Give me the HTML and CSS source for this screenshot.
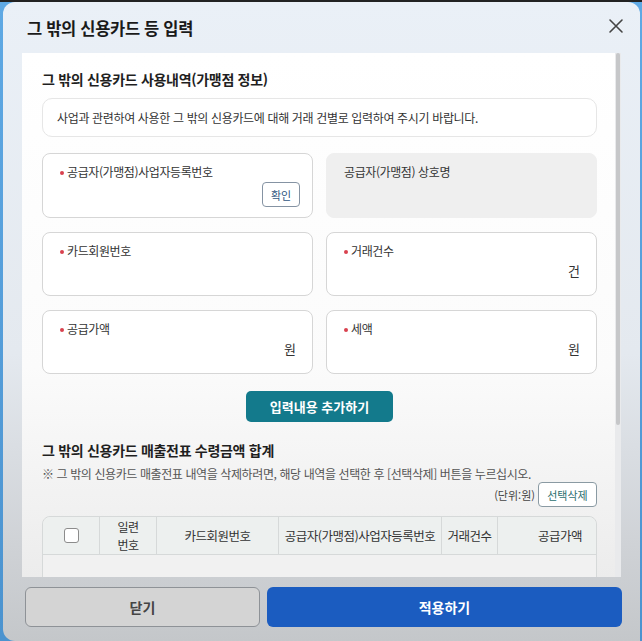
FILE: index.html
```html
<!DOCTYPE html>
<html lang="ko">
<head>
<meta charset="utf-8">
<link rel="stylesheet" href="styles.css">
</head>
<body>
<div class="modal">
  <div class="modal-header">
    <h1 class="modal-title">그 밖의 신용카드 등 입력</h1>
    <svg class="close" width="16" height="16" viewBox="0 0 16 16"><path d="M2 2L14 14M14 2L2 14" stroke="#444" stroke-width="1.6" fill="none" stroke-linecap="round"/></svg>
  </div>
  <div class="modal-body">
    <div class="panel">
      <h2 class="sec-title">그 밖의 신용카드 사용내역(가맹점 정보)</h2>
      <div class="notice">사업과 관련하여 사용한 그 밖의 신용카드에 대해 거래 건별로 입력하여 주시기 바랍니다.</div>
      <div class="fields">
        <div class="field">
          <div class="label req">공급자(가맹점)사업자등록번호</div>
          <button class="btn-check">확인</button>
        </div>
        <div class="field disabled">
          <div class="label">공급자(가맹점) 상호명</div>
        </div>
        <div class="field">
          <div class="label req">카드회원번호</div>
        </div>
        <div class="field">
          <div class="label req">거래건수</div>
          <div class="unit">건</div>
        </div>
        <div class="field">
          <div class="label req">공급가액</div>
          <div class="unit">원</div>
        </div>
        <div class="field">
          <div class="label req">세액</div>
          <div class="unit">원</div>
        </div>
      </div>
      <div class="add-row"><button class="btn-add">입력내용 추가하기</button></div>
      <h2 class="sec-title sec2">그 밖의 신용카드 매출전표 수령금액 합계</h2>
      <p class="note">※ 그 밖의 신용카드 매출전표 내역을 삭제하려면, 해당 내역을 선택한 후 [선택삭제] 버튼을 누르십시오.</p>
      <div class="tools"><span class="unit-note">(단위:원)</span><button class="btn-del">선택삭제</button></div>
      <div class="table">
        <div class="thead">
          <div class="th c1"><span class="chk"></span></div>
          <div class="th c2"><span class="stack"><span>일련</span><span>번호</span></span></div>
          <div class="th c3">카드회원번호</div>
          <div class="th c4">공급자(가맹점)사업자등록번호</div>
          <div class="th c5">거래건수</div>
          <div class="th c6">공급가액</div>
        </div>
        <div class="tbody"></div>
      </div>
    </div>
    <div class="scroll"><div class="thumb"></div></div>
  </div>
  <div class="modal-footer">
    <button class="btn-close">닫기</button>
    <button class="btn-apply">적용하기</button>
  </div>
</div>
</body>
</html>
```
FILE: styles.css
```css
* { box-sizing: border-box; }
html, body { margin: 0; padding: 0; }
body {
  width: 642px;
  height: 641px;
  overflow: hidden;
  background: linear-gradient(180deg, #5fa9e4 0%, #4b93cf 100%);
  border-top: 2px solid #222;
  padding-left: 3px;
  padding-right: 2px;
  font-family: "Noto Sans CJK KR", "Noto Sans", sans-serif;
  color: #222;
}
button { font-family: inherit; cursor: pointer; }
.modal {
  height: 639px;
  border-radius: 12px 12px 0 12px;
  background: linear-gradient(180deg, #eaf0f7 0%, #e4e9ef 55%, #cfd2d6 85%, #c4c7ca 100%);
  display: flex;
  flex-direction: column;
}
.modal-header {
  height: 51px;
  display: flex;
  align-items: center;
  justify-content: space-between;
  padding: 0 16px 0 24px;
}
.modal-title {
  margin: 0;
  font-size: 16.5px;
  font-weight: 700;
  color: #1a1a1a;
  letter-spacing: -0.3px;
}
.close { margin-top: -4px; }
.modal-body {
  display: flex;
  padding: 0 19px 0 19px;
  height: 524px;
}
.panel {
  flex: 1;
  background: linear-gradient(180deg, #ffffff 0%, #fbfbfb 60%, #ececec 100%);
  padding: 17px 18px 0 20px;
  overflow: hidden;
}
.scroll {
  width: 6px;
  background: #e9eaec;
  padding: 0 1px;
}
.thumb {
  height: 372px;
  background: #c6c7c9;
  border-radius: 3px;
}
.sec-title {
  margin: 0;
  font-size: 14px;
  font-weight: 700;
  line-height: 18px;
  color: #1f1f1f;
  letter-spacing: -0.3px;
}
.notice {
  margin-top: 10px;
  height: 39px;
  border: 1px solid #e6e6e6;
  border-radius: 10px;
  padding: 0 14px;
  display: flex;
  align-items: center;
  font-size: 12px;
  color: #333;
  letter-spacing: -0.35px;
  background: #fff;
}
.fields {
  margin-top: 16px;
  display: grid;
  grid-template-columns: 271px 271px;
  column-gap: 13px;
  row-gap: 14px;
}
.field {
  height: 65px;
  border: 1px solid #d6d6d6;
  border-radius: 8px;
  background: #fff;
  padding: 10px 16px 10px 17px;
  display: flex;
  flex-direction: column;
  justify-content: space-between;
}
.field:nth-child(n+3) { height: 64px; }
.field.disabled {
  background: #efefef;
  border-color: #efefef;
}
.label {
  font-size: 12px;
  line-height: 16px;
  color: #333;
  letter-spacing: -0.4px;
}
.req::before {
  content: "";
  display: inline-block;
  width: 4px;
  height: 4px;
  border-radius: 50%;
  background: #d9414f;
  margin: 0 3px 2px 0;
  vertical-align: middle;
}
.btn-check {
  align-self: flex-end;
  margin-right: -4px;
  width: 38px;
  height: 25px;
  padding: 0;
  font-size: 11px;
  color: #2f567f;
  background: #fff;
  border: 1px solid #8593a3;
  border-radius: 4px;
}
.unit {
  align-self: flex-end;
  font-size: 13px;
  color: #333;
  margin-bottom: 5px;
}
.add-row {
  display: flex;
  justify-content: center;
  margin-top: 17px;
}
.btn-add {
  width: 147px;
  height: 31px;
  border: 0;
  border-radius: 5px;
  background: #137a8c;
  color: #fff;
  font-size: 13px;
  font-weight: 700;
  padding: 0;
}
.sec2 { margin-top: 19px; }
.note {
  margin: 8px 0 0;
  font-size: 12px;
  line-height: 14px;
  color: #555;
  letter-spacing: -0.4px;
}
.tools {
  margin-top: 1px;
  display: flex;
  justify-content: flex-end;
  align-items: center;
  gap: 3px;
}
.unit-note { font-size: 11px; color: #444; }
.btn-del {
  width: 59px;
  height: 25px;
  padding: 0;
  font-size: 11px;
  color: #2c6f6f;
  background: #fff;
  border: 1px solid #8a9aa3;
  border-radius: 4px;
}
.table {
  margin-top: 9px;
  border: 1px solid #d6d9d9;
  border-radius: 8px 8px 0 0;
  background: #f1f1f1;
}
.thead {
  display: grid;
  grid-template-columns: 56px 57px 122px 163px 56px 1fr;
  height: 38px;
  background: #edf0ef;
  border-bottom: 1px solid #d6d9d9;
  border-radius: 8px 8px 0 0;
}
.th {
  display: flex;
  align-items: center;
  justify-content: center;
  text-align: center;
  font-size: 12.5px;
  line-height: 16px;
  color: #333;
  border-left: 1px solid #d6d9d9;
  letter-spacing: -0.5px;
  white-space: nowrap;
}
.stack {
  display: flex;
  flex-direction: column;
  align-items: center;
  font-size: 12px;
  line-height: 18px;
}
.th.c1 { border-left: 0; }
.th.c6 { justify-content: flex-end; padding-right: 14px; }
.chk {
  width: 15px;
  height: 15px;
  border: 1px solid #8c8c8c;
  border-radius: 3px;
  background: #fff;
}
.tbody { height: 30px; }
.modal-footer {
  display: flex;
  gap: 7px;
  padding: 10px 18px 0 22px;
}
.btn-close {
  width: 235px;
  height: 40px;
  border: 1px solid #8e9297;
  border-radius: 6px;
  background: #d4d4d4;
  color: #444;
  font-size: 14px;
  font-weight: 700;
}
.btn-apply {
  flex: 1;
  height: 40px;
  border: 0;
  border-radius: 6px;
  background: #1b5cc0;
  color: #fff;
  font-size: 14px;
  font-weight: 700;
}
```
